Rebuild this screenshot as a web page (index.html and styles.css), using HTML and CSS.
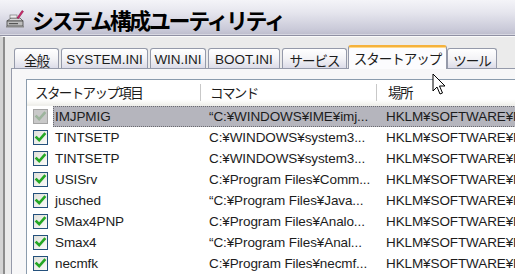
FILE: index.html
```html
<!DOCTYPE html>
<html lang="ja">
<head>
<meta charset="utf-8">
<title>システム構成ユーティリティ</title>
<link rel="stylesheet" href="styles.css">
</head>
<body>
<div class="window">
  <div class="titlebar">
    <svg class="app-icon" width="20" height="20" viewBox="0 0 20 20">
      <path d="M2 12 L6 9 L15 9 L18 12 Z" fill="#d8d8d8" stroke="#555" stroke-width="0.8"/>
      <rect x="2" y="12" width="16" height="5" fill="#bdbdbd" stroke="#444" stroke-width="0.8"/>
      <rect x="4" y="14" width="9" height="1.2" fill="#555"/>
      <rect x="5" y="6" width="7" height="3" fill="#eee" stroke="#666" stroke-width="0.6"/>
      <path d="M12 9 L17 1.5 L18.5 2.5 L13.5 9.5 Z" fill="#d0286a" stroke="#7a1040" stroke-width="0.5"/>
      <rect x="1" y="17" width="18" height="1.5" fill="#888"/>
    </svg>
    <span class="title">システム構成ユーティリティ</span>
  </div>
  <div class="body">
    <div class="body-inner">
      <div class="tabs">
        <div class="tab jp w1">全般</div>
        <div class="tab w2">SYSTEM.INI</div>
        <div class="tab w3">WIN.INI</div>
        <div class="tab w4">BOOT.INI</div>
        <div class="tab jp w5">サービス</div>
        <div class="tab jp active w6">スタートアップ</div>
        <div class="tab jp w7">ツール</div>
      </div>
      <div class="panel">
        <div class="list">
          <div class="lv-head">
            <div class="hcell h1">スタートアップ項目</div>
            <div class="hcell h2">コマンド</div>
            <div class="hcell h3">場所</div>
          </div>
          <div class="row selected">
            <div class="chk"><span class="cb disabled"><svg viewBox="0 0 13 13" width="13" height="13"><path d="M2.5 6.5 L5.2 9.2 L10.5 3.2" /></svg></span></div>
            <div class="cells"><span class="c1">IMJPMIG</span><span class="c2">“C:¥WINDOWS¥IME¥imj...</span><span class="c3">HKLM¥SOFTWARE¥M</span></div>
          </div>
          <div class="row">
            <div class="chk"><span class="cb"><svg viewBox="0 0 13 13" width="13" height="13"><path d="M2.5 6.5 L5.2 9.2 L10.5 3.2" /></svg></span></div>
            <div class="cells"><span class="c1">TINTSETP</span><span class="c2">C:¥WINDOWS¥system3...</span><span class="c3">HKLM¥SOFTWARE¥M</span></div>
          </div>
          <div class="row">
            <div class="chk"><span class="cb"><svg viewBox="0 0 13 13" width="13" height="13"><path d="M2.5 6.5 L5.2 9.2 L10.5 3.2" /></svg></span></div>
            <div class="cells"><span class="c1">TINTSETP</span><span class="c2">C:¥WINDOWS¥system3...</span><span class="c3">HKLM¥SOFTWARE¥M</span></div>
          </div>
          <div class="row">
            <div class="chk"><span class="cb"><svg viewBox="0 0 13 13" width="13" height="13"><path d="M2.5 6.5 L5.2 9.2 L10.5 3.2" /></svg></span></div>
            <div class="cells"><span class="c1">USISrv</span><span class="c2">C:¥Program Files¥Comm...</span><span class="c3">HKLM¥SOFTWARE¥M</span></div>
          </div>
          <div class="row">
            <div class="chk"><span class="cb"><svg viewBox="0 0 13 13" width="13" height="13"><path d="M2.5 6.5 L5.2 9.2 L10.5 3.2" /></svg></span></div>
            <div class="cells"><span class="c1">jusched</span><span class="c2">“C:¥Program Files¥Java...</span><span class="c3">HKLM¥SOFTWARE¥M</span></div>
          </div>
          <div class="row">
            <div class="chk"><span class="cb"><svg viewBox="0 0 13 13" width="13" height="13"><path d="M2.5 6.5 L5.2 9.2 L10.5 3.2" /></svg></span></div>
            <div class="cells"><span class="c1">SMax4PNP</span><span class="c2">C:¥Program Files¥Analo...</span><span class="c3">HKLM¥SOFTWARE¥M</span></div>
          </div>
          <div class="row">
            <div class="chk"><span class="cb"><svg viewBox="0 0 13 13" width="13" height="13"><path d="M2.5 6.5 L5.2 9.2 L10.5 3.2" /></svg></span></div>
            <div class="cells"><span class="c1">Smax4</span><span class="c2">“C:¥Program Files¥Anal...</span><span class="c3">HKLM¥SOFTWARE¥M</span></div>
          </div>
          <div class="row">
            <div class="chk"><span class="cb"><svg viewBox="0 0 13 13" width="13" height="13"><path d="M2.5 6.5 L5.2 9.2 L10.5 3.2" /></svg></span></div>
            <div class="cells"><span class="c1">necmfk</span><span class="c2">C:¥Program Files¥necmf...</span><span class="c3">HKLM¥SOFTWARE¥M</span></div>
          </div>
        </div>
      </div>
    </div>
  </div>
  <svg class="cursor" width="14" height="23" viewBox="0 0 14 23">
    <path d="M1 1 L1 18 L5 14 L8 21 L10.5 20 L7.5 13 L13 13 Z" fill="#fff" stroke="#000" stroke-width="1" stroke-linejoin="miter"/>
  </svg>
</div>
</body>
</html>
```

FILE: styles.css
```css
* { box-sizing: border-box; margin: 0; padding: 0; }
html, body { width: 515px; height: 274px; overflow: hidden; }
body {
  background: #ebebeb;
  font-family: "Liberation Sans", "Noto Sans CJK JP", sans-serif;
  font-size: 13.5px;
  color: #1c1c1c;
}
.window {
  width: 515px;
  height: 274px;
  position: relative;
  overflow: hidden;
  display: flex;
  flex-direction: column;
}
.titlebar {
  flex: none;
  height: 36px;
  display: flex;
  align-items: center;
  padding-left: 5px;
  gap: 7px;
  background: linear-gradient(#f4f4f8 0%, #e6e6ee 35%, #c9c9d8 85%, #bcbccc 100%);
  border-bottom: 1px solid #8f90a3;
  box-shadow: inset 0 -1px 0 #d8d8e2;
}
.app-icon { flex: none; margin-top: 2px; }
.title {
  font-family: "Noto Sans CJK JP", sans-serif;
  font-weight: 700;
  font-size: 22px;
  letter-spacing: -2.4px;
  line-height: 1;
  white-space: nowrap;
  margin-top: 3px;
  color: #000;
}
.body {
  flex: 1;
  border-left: 3px solid #d4d4d4;
  border-top: 1px solid #fbfbfb;
  display: flex;
}
.body-inner {
  flex: 1;
  border-left: 2px solid #8d8d8d;
  padding-left: 6px;
  display: flex;
  flex-direction: column;
}
.tabs {
  flex: none;
  height: 31px;
  display: flex;
  align-items: flex-end;
  gap: 2px;
  padding-left: 3px;
  position: relative;
  z-index: 1;
}
.tab {
  height: 20px;
  border: 1px solid #959aaa;
  border-bottom: none;
  border-radius: 3px 3px 0 0;
  background: linear-gradient(#ffffff, #f3f3f6 50%, #dcdce8);
  display: flex;
  align-items: center;
  justify-content: center;
  white-space: nowrap;
  padding-top: 2px;
  flex: none;
}
.tab.jp { letter-spacing: -1px; }
.tab.w1 { width: 45px; }
.tab.w2 { width: 87px; }
.tab.w3 { width: 56px; }
.tab.w4 { width: 72px; }
.tab.w5 { width: 65px; margin-right: -1px; }
.tab.w6 { width: 99px; margin-right: -2px; }
.tab.w7 { width: 50px; }
.tab.active {
  height: 24px;
  margin-bottom: -1px;
  background: #fcfcfe;
  border-color: #959aaa;
  border-top: 2px solid #f5b23c;
  box-shadow: inset 0 1px 0 #ffd98a;
  padding-top: 0;
  padding-bottom: 1px;
}
.panel {
  flex: 1;
  border-top: 1px solid #959aaa;
  border-left: 1px solid #959aaa;
  background: #f7f7f8;
  padding: 10px 0 0 14px;
}
.list {
  height: 100%;
  border-top: 1px solid #8b9cad;
  border-left: 1px solid #8b9cad;
  background: #fff;
}
.lv-head {
  display: grid;
  grid-template-columns: 174px 176px 1fr;
  height: 26px;
  border-bottom: 2px solid #f0f0ec;
  background: linear-gradient(#fff 80%, #f4f4f0);
}
.hcell {
  position: relative;
  display: flex;
  align-items: center;
  white-space: nowrap;
  letter-spacing: -1.6px;
}
.h1 { padding-left: 8px; }
.h2 { padding-left: 9px; }
.h3 { padding-left: 11px; }
.h1::after, .h2::after {
  content: "";
  position: absolute;
  right: 0;
  top: 4px;
  bottom: 3px;
  width: 1px;
  background: #c8c8c8;
}
.row {
  display: flex;
  height: 21px;
}
.chk {
  flex: none;
  width: 26px;
  padding-left: 6px;
  display: flex;
  align-items: center;
}
.cb {
  width: 15px;
  height: 15px;
  border: 1px solid #24517c;
  background: linear-gradient(135deg, #e0e0da, #fbfbf9);
  display: flex;
  align-items: center;
  justify-content: center;
}
.cb svg path {
  fill: none;
  stroke: #25a725;
  stroke-width: 2.6;
  stroke-linecap: square;
}
.cb.disabled {
  border-color: #a4a4a4;
  background: #c9c9c9;
}
.cb.disabled svg path { stroke: #9cb49c; }
.cells {
  flex: 1;
  display: grid;
  grid-template-columns: 148px 176px 1fr;
  align-items: center;
  white-space: nowrap;
  letter-spacing: -0.1px;
}
.row.selected .cells {
  background: #b5b5bd;
  outline: 1px dotted #6a6a70;
  outline-offset: -1px;
}
.c1 { padding-left: 2px; }
.c2 { padding-left: 8px; overflow: hidden; }
.c3 { padding-left: 9px; }
.cursor {
  position: absolute;
  left: 432px;
  top: 73px;
}
```
